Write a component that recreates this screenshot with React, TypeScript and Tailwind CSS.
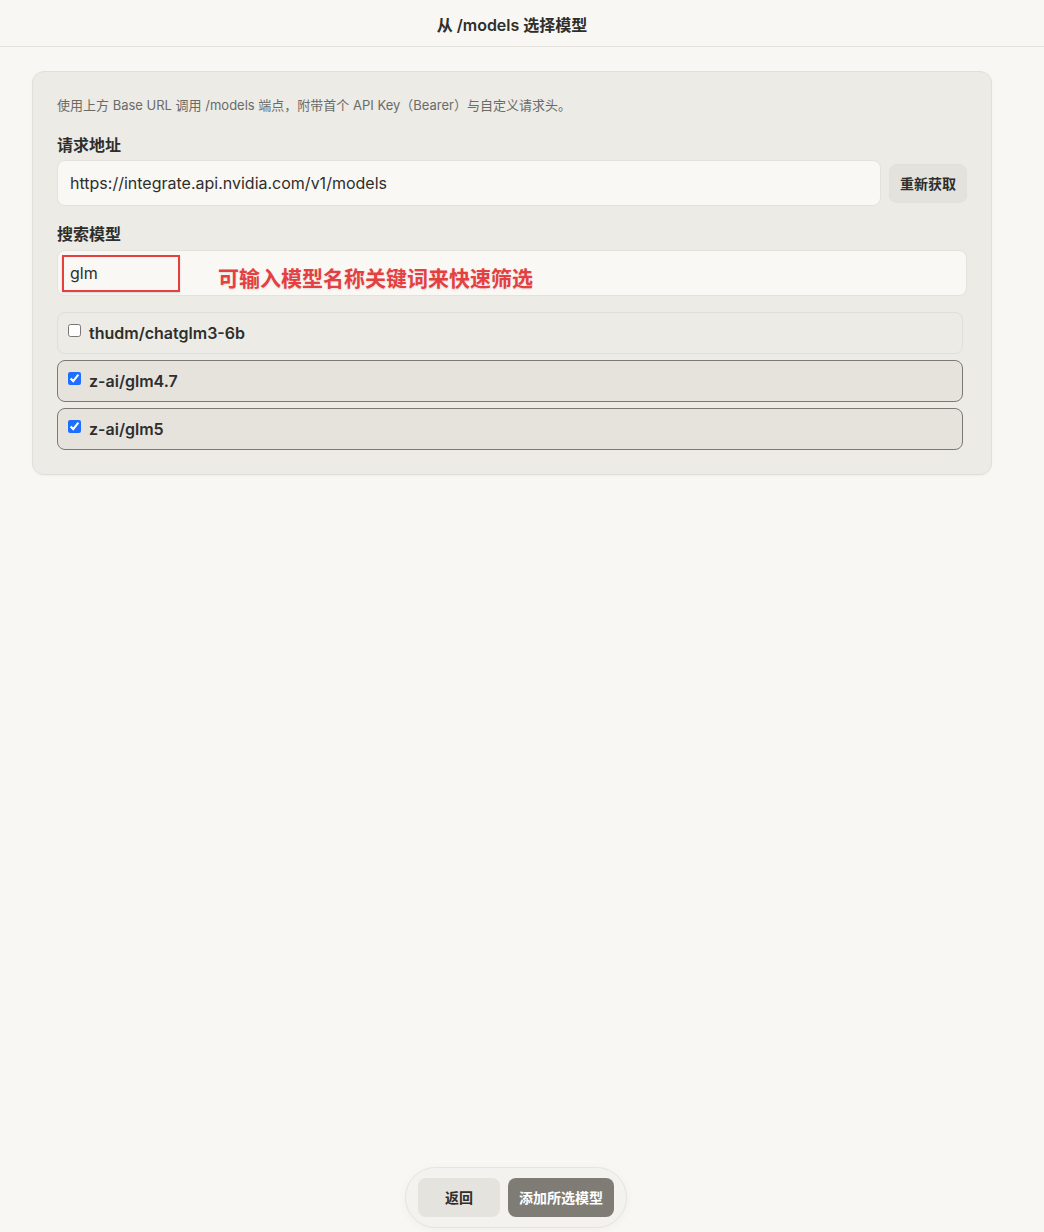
import React, { useState } from "react";

const FONT = '"Inter", "Noto Sans CJK SC", "Noto Sans", sans-serif';

type Model = { id: string; checked: boolean };

const INITIAL: Model[] = [
  { id: "thudm/chatglm3-6b", checked: false },
  { id: "z-ai/glm4.7", checked: true },
  { id: "z-ai/glm5", checked: true },
];

function ModelRow({ model, onToggle }: { model: Model; onToggle: () => void }) {
  return (
    <label
      className={
        "flex h-[42px] items-start gap-[8px] rounded-[8px] border px-[10px] pt-[9px] " +
        (model.checked
          ? "border-[#7b7975] bg-[#e6e3dd]"
          : "border-[#e0ded8] bg-[#ecebe6]")
      }
    >
      <input
        type="checkbox"
        checked={model.checked}
        onChange={onToggle}
        className="mt-[2px] h-[13px] w-[13px] accent-[#1f6fff]"
      />
      <span className="text-[16px] font-semibold leading-[22px] text-[#2f2e2b]">{model.id}</span>
    </label>
  );
}

export default function App() {
  const [models, setModels] = useState<Model[]>(INITIAL);
  const [query, setQuery] = useState("glm");

  const toggle = (id: string) =>
    setModels((prev) => prev.map((m) => (m.id === id ? { ...m, checked: !m.checked } : m)));

  return (
    <div
      className="flex min-h-screen flex-col bg-[#f8f7f4] text-[#2f2e2b]"
      style={{ fontFamily: FONT }}
    >
      <header className="flex h-[47px] items-center justify-center border-b border-[#e3e1dc] pr-[20px] pt-[4px]">
        <h1 className="text-[16px] font-semibold text-[#2f2e2b]">从 /models 选择模型</h1>
      </header>

      <main className="px-[32px] pt-[24px]">
        <section className="w-[960px] rounded-[12px] border border-[#e1dfda] bg-[#ecebe6] px-[24px] pb-[24px] pt-[24px] shadow-[0_1px_2px_rgba(0,0,0,0.04)]">
          <p className="text-[13px] leading-[18px] text-[#6b6a66]">
            使用上方 Base URL 调用 /models 端点，附带首个 API Key（Bearer）与自定义请求头。
          </p>

          <div className="mt-[20px] text-[16px] font-semibold leading-[22px]">请求地址</div>
          <div className="mt-[4px] flex items-center gap-[8px]">
            <input
              readOnly
              value="https://integrate.api.nvidia.com/v1/models"
              className="h-[46px] flex-1 rounded-[8px] border border-[#e4e2dd] bg-[#f9f8f5] px-[12px] text-[16px] text-[#2f2e2b] outline-none"
            />
            <button className="h-[39px] w-[78px] rounded-[8px] border border-[#e2e0da] bg-[#e4e2dc] text-[14px] font-semibold text-[#2f2e2b]">
              重新获取
            </button>
          </div>

          <div className="mt-[17px] text-[16px] font-semibold leading-[22px]">搜索模型</div>
          <div className="relative mt-[5px]">
            <input
              value={query}
              onChange={(e) => setQuery(e.target.value)}
              className="h-[46px] w-full rounded-[8px] border border-[#e4e2dd] bg-[#f9f8f5] px-[12px] text-[16px] text-[#2f2e2b] outline-none"
            />
            {/* annotation callout over the search field */}
            <div className="pointer-events-none absolute left-[5px] top-[5px] h-[37px] w-[118px] border-2 border-[#e5403f] shadow-[0_1px_2px_rgba(0,0,0,0.15)]" />
            <span className="pointer-events-none absolute left-[161px] top-[15px] text-[21px] font-bold leading-[28px] text-[#e5403f] [text-shadow:0_1px_2px_rgba(0,0,0,0.12)]">
              可输入模型名称关键词来快速筛选
            </span>
          </div>

          <div className="mt-[16px] flex flex-col gap-[6px] pr-[4px]">
            {models
              .filter((m) => m.id.toLowerCase().includes(query.toLowerCase()))
              .map((m) => (
                <ModelRow key={m.id} model={m} onToggle={() => toggle(m.id)} />
              ))}
          </div>
        </section>
      </main>

      <footer className="mt-auto flex justify-center pb-[4px] pr-[12px]">
        <div className="flex items-center gap-[8px] rounded-full border border-[#e6e4df] bg-[#f3f2ee] px-[12px] py-[10px] shadow-[0_2px_8px_rgba(0,0,0,0.04)]">
          <button className="h-[39px] w-[82px] rounded-[8px] bg-[#e5e3dd] text-[14px] font-semibold text-[#2f2e2b]">
            返回
          </button>
          <button className="h-[39px] w-[106px] rounded-[8px] bg-[#7f7c76] text-[14px] font-semibold text-white">
            添加所选模型
          </button>
        </div>
      </footer>
    </div>
  );
}
